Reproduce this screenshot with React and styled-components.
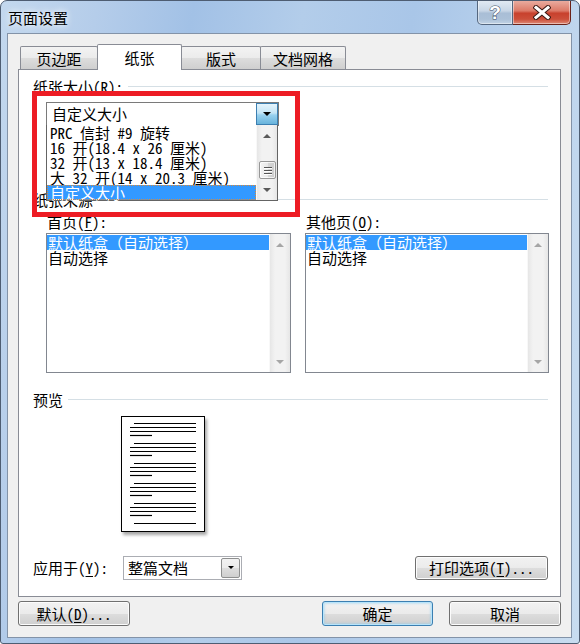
import React from 'react'
import styled, { createGlobalStyle } from 'styled-components'

const FONT = `"Noto Sans Mono CJK SC", "Noto Sans CJK SC", "Liberation Mono", monospace`

const GlobalStyle = createGlobalStyle`
    html, body {
        margin: 0;
        padding: 0;
        background: #fff;
    }
    body {
        font-family: ${FONT};
        font-size: 15px;
        color: #000;
    }
    * {
        box-sizing: border-box;
    }
`

const Window = styled.div`
    width: 580px;
    height: 644px;
    display: flex;
    flex-direction: column;
    border: 1px solid #4e5d72;
    border-radius: 7px 7px 3px 3px;
    overflow: hidden;
    background: linear-gradient(100deg, #c3d8ee 0%, #b5cdea 14%, #a2c1e6 28%, #b3cdea 44%, #a9c6e8 60%, #bdd4ed 80%, #c8dcf0 100%);
`

const TitleBar = styled.div`
    height: 32px;
    flex-shrink: 0;
    display: flex;
    align-items: flex-start;
`

const Title = styled.div`
    padding-left: 7px;
    line-height: 34px;
    text-shadow: 0 0 6px rgba(255, 255, 255, 0.9), 0 0 10px rgba(255, 255, 255, 0.6);
`

const Captions = styled.div`
    margin-left: auto;
    margin-right: 8px;
    margin-top: -1px;
    display: flex;
`

const CaptionButton = styled.div`
    width: ${p => p.$w}px;
    height: 25px;
    display: flex;
    align-items: center;
    justify-content: center;
    border: 1px solid ${p => p.$close ? '#6b2219' : '#55677f'};
    border-top: none;
    border-left: ${p => p.$close ? 'none' : '1px solid #55677f'};
    border-radius: ${p => p.$close ? '0 0 5px 0' : '0 0 0 5px'};
    background: ${p => p.$close
        ? 'linear-gradient(#eab0a4 0%, #dc7a68 45%, #c8412d 55%, #cc4f3a 80%, #de8a77 100%)'
        : 'linear-gradient(#e3ebf4 0%, #c8d6e6 45%, #a9bed6 55%, #acc1d8 80%, #c2d3e5 100%)'};
    box-shadow: inset 0 0 0 1px rgba(255, 255, 255, 0.45);
`

const HelpGlyph = styled.span`
    font-family: "Liberation Sans", sans-serif;
    font-weight: bold;
    font-size: 19px;
    line-height: 1;
    color: #fff;
    -webkit-text-stroke: 1px #3e4f66;
    paint-order: stroke fill;
    margin-top: 1px;
`

const Client = styled.div`
    flex: 1;
    margin: 0 7px 5px 6px;
    border: 1px solid #8393a8;
    background: #f0f0f0;
    padding: 10px 10px 10px 10px;
    display: flex;
    flex-direction: column;
`

const TabRow = styled.div`
    height: 25px;
    flex-shrink: 0;
    display: flex;
    align-items: flex-end;
    padding-left: 2px;
`

const Tab = styled.div`
    width: ${p => p.$w}px;
    height: ${p => p.$active ? 26 : 23}px;
    margin-left: -1px;
    margin-bottom: ${p => p.$active ? -1 : 0}px;
    border: 1px solid #898c95;
    border-bottom: none;
    border-radius: 2px 2px 0 0;
    display: flex;
    align-items: center;
    justify-content: center;
    position: relative;
    z-index: ${p => p.$active ? 2 : 0};
    background: ${p => p.$active ? '#fff' : 'linear-gradient(#f3f3f3 0%, #ebebeb 50%, #dddddd 51%, #cfcfcf 100%)'};
    &:first-child {
        margin-left: 0;
    }
`

const Panel = styled.div`
    height: 528px;
    flex-shrink: 0;
    position: relative;
    border: 1px solid #898c95;
    background: #fff;
    padding: 9px 12px 16px 14px;
    display: flex;
    flex-direction: column;
`

const SectionHeader = styled.div`
    display: flex;
    align-items: center;
    gap: 5px;
    height: 15px;
    line-height: 15px;
    margin-top: ${p => p.$top || 0}px;
    white-space: nowrap;
    &::after {
        content: '';
        flex: 1;
        height: 1px;
        background: #d5dfe5;
    }
`

const Key = styled.span`
    text-decoration: underline;
    text-underline-offset: 2px;
`

const ComboWrap = styled.div`
    position: relative;
    width: ${p => p.$w}px;
    height: 24px;
    margin: ${p => p.$margin || 0};
    border: 1px solid ${p => p.$dark ? '#7a7a7a' : '#abadb3'};
    background: #fff;
    display: flex;
    align-items: center;
    flex-shrink: 0;
`

const ComboText = styled.div`
    flex: 1;
    padding-left: ${p => p.$pad || 5}px;
    line-height: 22px;
    white-space: nowrap;
`

const ComboButton = styled.div`
    width: ${p => p.$w || 20}px;
    align-self: stretch;
    display: flex;
    align-items: center;
    justify-content: center;
    border: 1px solid ${p => p.$hot ? '#3c7fb1' : '#8e8f8f'};
    margin: ${p => p.$hot ? '0' : '1px'};
    border-radius: ${p => p.$hot ? 0 : 2}px;
    background: ${p => p.$hot
        ? 'linear-gradient(#e5f4fc 0%, #c4e5f6 45%, #98d1ef 55%, #68b3db 100%)'
        : 'linear-gradient(#f2f2f2 0%, #ebebeb 50%, #dddddd 51%, #cfcfcf 100%)'};
`

const Triangle = styled.span`
    width: 0;
    height: 0;
    border-left: ${p => p.$size || 4}px solid transparent;
    border-right: ${p => p.$size || 4}px solid transparent;
    border-top: ${p => p.$up ? 'none' : `${p.$size || 4}px solid ${p.$color || '#000'}`};
    border-bottom: ${p => p.$up ? `${p.$size || 4}px solid ${p.$color || '#000'}` : 'none'};
`

const Dropdown = styled.div`
    position: absolute;
    top: 100%;
    left: -1px;
    width: 232px;
    height: 76px;
    z-index: 3;
    border: 1px solid #646464;
    border-top: none;
    background: #fff;
    display: flex;
`

const Items = styled.div`
    flex: 1;
    display: flex;
    flex-direction: column;
    padding-top: ${p => p.$top || 0}px;
    min-width: 0;
`

const Item = styled.div`
    height: 15px;
    line-height: 15px;
    padding-left: ${p => p.$pad || 3}px;
    white-space: nowrap;
    background: ${p => p.$selected ? '#3399ff' : 'transparent'};
    color: ${p => p.$selected ? '#fff' : '#000'};
    outline: ${p => p.$focus ? '1px dotted #d8893a' : 'none'};
    outline-offset: -1px;
`

const ScrollBar = styled.div`
    width: 21px;
    flex-shrink: 0;
    display: flex;
    flex-direction: column;
    background: linear-gradient(90deg, #e6e6e6 0%, #f2f2f2 25%, #f2f2f2 75%, #e6e6e6 100%);
    border-left: 1px solid #f8f8f8;
`

const ArrowCell = styled.div`
    height: 21px;
    display: flex;
    align-items: center;
    justify-content: center;
`

const Track = styled.div`
    flex: 1;
`

const Thumb = styled.div`
    width: 17px;
    height: 18px;
    margin: ${p => p.$top}px 0 0 2px;
    border: 1px solid #979797;
    border-radius: 2px;
    background: linear-gradient(90deg, #f4f4f4 0%, #e8e8e8 50%, #d7d7d7 51%, #cdcdcd 100%);
    box-shadow: inset 0 0 0 1px rgba(255, 255, 255, 0.7);
    display: flex;
    flex-direction: column;
    align-items: center;
    justify-content: center;
    gap: 2px;
`

const Grip = styled.span`
    width: 8px;
    height: 1px;
    background: #555;
    box-shadow: 0 1px 0 #fff;
`

const RedBox = styled.div`
    position: absolute;
    left: 13px;
    top: 21px;
    width: 268px;
    height: 126px;
    border: 5px solid #ed1c24;
    pointer-events: none;
    z-index: 4;
`

const TrayRow = styled.div`
    display: grid;
    grid-template-columns: 245px 244px;
    column-gap: 14px;
    margin: 7px 0 0 13px;
`

const TrayColumn = styled.div`
    display: flex;
    flex-direction: column;
`

const FieldLabel = styled.div`
    height: 15px;
    line-height: 15px;
    margin-left: 1px;
    margin-bottom: 4px;
    white-space: nowrap;
`

const ListBox = styled.div`
    height: 140px;
    border: 1px solid #828790;
    background: #fff;
    display: flex;
`

const Page = styled.div`
    width: 84px;
    height: 116px;
    margin: 9px 0 0 88px;
    border: 1px solid #000;
    background: #fff;
    box-shadow: 2px 3px 3px rgba(0, 0, 0, 0.35);
    flex-shrink: 0;
    svg {
        display: block;
    }
`

const BottomRow = styled.div`
    margin-top: auto;
    display: flex;
    align-items: center;
    height: 25px;
`

const ApplyLabel = styled.div`
    width: 90px;
    white-space: nowrap;
`

const Button = styled.div`
    width: ${p => p.$w}px;
    height: ${p => p.$h || 25}px;
    margin-left: ${p => p.$ml || '0'};
    display: flex;
    align-items: center;
    justify-content: center;
    white-space: nowrap;
    border: 1px solid ${p => p.$default ? '#3c7fb1' : '#707070'};
    border-radius: 3px;
    background: linear-gradient(#f2f2f2 0%, #ebebeb 50%, #dddddd 51%, #cfcfcf 100%);
    box-shadow: ${p => p.$default
        ? 'inset 0 0 0 1px #b7e4fb, inset 0 0 2px 2px rgba(120, 200, 240, 0.35)'
        : 'inset 0 0 0 1px #fcfcfc'};
`

const ButtonRow = styled.div`
    display: flex;
    margin-top: 4px;
`

const sizes = [
    'PRC 信封 #9 旋转',
    '16 开(18.4 x 26 厘米)',
    '32 开(13 x 18.4 厘米)',
    '大 32 开(14 x 20.3 厘米)',
]

function PreviewLines() {
    const lines = []
    for (let g = 0; g < 5; g++) {
        const y = 6.5 + g * 20
        lines.push([12, 74, y], [8, 74, y + 4], [8, 74, y + 8], [8, 30, y + 12])
    }
    lines.push([12, 74, 106.5])
    return (
        <svg width="82" height="114" viewBox="0 0 82 114">
            {lines.map(([x1, x2, y], i) => (
                <line key={i} x1={x1} x2={x2} y1={y} y2={y} stroke="#000" strokeWidth="1.2" />
            ))}
        </svg>
    )
}

function TrayList({ label }) {
    return (
        <TrayColumn>
            <FieldLabel>{label}</FieldLabel>
            <ListBox>
                <Items $top={1}>
                    <Item $selected $pad={1}>默认纸盒（自动选择）</Item>
                    <Item $pad={1}>自动选择</Item>
                </Items>
                <ScrollBar>
                    <ArrowCell><Triangle $up $color="#a6a6a6" /></ArrowCell>
                    <Track />
                    <ArrowCell><Triangle $color="#a6a6a6" /></ArrowCell>
                </ScrollBar>
            </ListBox>
        </TrayColumn>
    )
}

export default function App() {
    return (
        <>
            <GlobalStyle />
            <Window>
                <TitleBar>
                    <Title>页面设置</Title>
                    <Captions>
                        <CaptionButton $w={36}>
                            <HelpGlyph>?</HelpGlyph>
                        </CaptionButton>
                        <CaptionButton $w={58} $close>
                            <svg width="18" height="15" viewBox="0 0 18 15">
                                <path d="M3 2.5 L15 12.5 M15 2.5 L3 12.5" stroke="#3b1a15" strokeWidth="5" strokeLinecap="square" />
                                <path d="M3 2.5 L15 12.5 M15 2.5 L3 12.5" stroke="#fff" strokeWidth="3" strokeLinecap="square" />
                            </svg>
                        </CaptionButton>
                    </Captions>
                </TitleBar>

                <Client>
                    <TabRow>
                        <Tab $w={78}>页边距</Tab>
                        <Tab $w={85} $active>纸张</Tab>
                        <Tab $w={80}>版式</Tab>
                        <Tab $w={86}>文档网格</Tab>
                    </TabRow>

                    <Panel>
                        <SectionHeader>
                            <span>纸张大小(<Key>R</Key>):</span>
                        </SectionHeader>
                        <ComboWrap $w={233} $margin="8px 0 0 13px" $dark>
                            <ComboText>自定义大小</ComboText>
                            <ComboButton $hot $w={22}>
                                <Triangle />
                            </ComboButton>
                            <Dropdown>
                                <Items>
                                    {sizes.map(s => <Item key={s}>{s}</Item>)}
                                    <Item $selected $focus>自定义大小</Item>
                                </Items>
                                <ScrollBar>
                                    <ArrowCell><Triangle $up $color="#5a5a5a" /></ArrowCell>
                                    <Track>
                                        <Thumb $top={15}>
                                            <Grip />
                                            <Grip />
                                            <Grip />
                                        </Thumb>
                                    </Track>
                                    <ArrowCell><Triangle $color="#5a5a5a" /></ArrowCell>
                                </ScrollBar>
                            </Dropdown>
                        </ComboWrap>

                        <SectionHeader $top={66}>
                            <span>纸张来源</span>
                        </SectionHeader>
                        <TrayRow>
                            <TrayList label={<>首页(<Key>F</Key>):</>} />
                            <TrayList label={<>其他页(<Key>O</Key>):</>} />
                        </TrayRow>

                        <SectionHeader $top={19}>
                            <span>预览</span>
                        </SectionHeader>
                        <Page>
                            <PreviewLines />
                        </Page>

                        <BottomRow>
                            <ApplyLabel>应用于(<Key>Y</Key>):</ApplyLabel>
                            <ComboWrap $w={119}>
                                <ComboText $pad={4}>整篇文档</ComboText>
                                <ComboButton $w={19}>
                                    <Triangle $size={3.5} />
                                </ComboButton>
                            </ComboWrap>
                            <Button $w={133} $h={24} $ml="auto">打印选项(<Key>T</Key>)...</Button>
                        </BottomRow>

                        <RedBox />
                    </Panel>

                    <ButtonRow>
                        <Button $w={112}>默认(<Key>D</Key>)...</Button>
                        <Button $w={111} $ml="auto" $default>确定</Button>
                        <Button $w={112} $ml="16px">取消</Button>
                    </ButtonRow>
                </Client>
            </Window>
        </>
    )
}
